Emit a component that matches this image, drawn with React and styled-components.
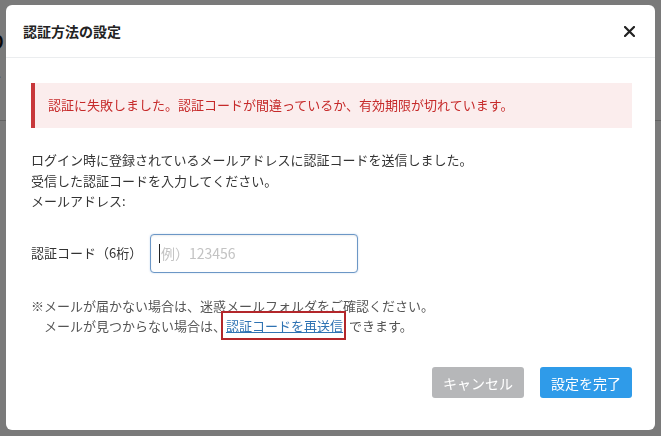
import React from 'react';
import styled, { createGlobalStyle } from 'styled-components';

const GlobalStyle = createGlobalStyle`
  html, body {
    margin: 0;
    padding: 0;
    background: #ffffff;
    font-family: "Noto Sans CJK JP", "Noto Sans", sans-serif;
    color: #333;
  }
`;

const Page = styled.div`
  width: 661px;
  height: 436px;
  overflow: hidden;
`;

const PageHeader = styled.div`
  height: 121px;
  border-bottom: 1px solid #cfcfcf;
  padding: 28px 0 0 0;
  box-sizing: border-box;
  margin-left: -12px;
`;

const PageTitle = styled.div`
  font-size: 18px;
  font-weight: bold;
  color: #111;
`;

const PageText = styled.div`
  font-size: 13px;
  line-height: 17px;
  color: #444;
`;

const Backdrop = styled.div`
  position: fixed;
  inset: 0;
  background: rgba(0, 0, 0, 0.52);
  display: flex;
  padding: 5px 6px 6px 6px;
`;

const Modal = styled.div`
  flex: 1;
  background: #fff;
  border-radius: 6px;
  display: flex;
  flex-direction: column;
`;

const Header = styled.div`
  height: 52px;
  border-bottom: 1px solid #ebedef;
  display: flex;
  align-items: center;
  justify-content: space-between;
  padding: 0 20px 0 17px;
`;

const Title = styled.h5`
  margin: 0;
  font-size: 14px;
  font-weight: bold;
  color: #222;
`;

const CloseButton = styled.button`
  border: 0;
  background: none;
  padding: 0;
  width: 11px;
  height: 11px;
  display: flex;
  cursor: pointer;
`;

const Body = styled.div`
  padding: 25px 23px 0 25px;
  font-size: 13px;
  line-height: 20.5px;
`;

const Alert = styled.div`
  height: 45px;
  box-sizing: border-box;
  background: #fbeded;
  border-left: 4px solid #c8383b;
  color: #c62a2a;
  display: flex;
  align-items: center;
  padding-left: 13px;
`;

const Message = styled.p`
  margin: 22px 0 0;
`;

const FieldRow = styled.div`
  display: flex;
  align-items: center;
  margin-top: 22px;
`;

const Label = styled.label`
  width: 119px;
  color: #333;
`;

const InputWrap = styled.div`
  position: relative;
`;

const Input = styled.input`
  width: 208px;
  height: 39px;
  box-sizing: border-box;
  border: 1px solid #6c97c6;
  border-radius: 4px;
  box-shadow: inset 0 1px 2px rgba(0, 0, 0, 0.08), 0 0 2px rgba(80, 140, 210, 0.35);
  padding: 0 10px;
  font-family: inherit;
  font-size: 14px;
  color: #333;
  outline: none;
  caret-color: transparent;

  &::placeholder {
    color: #c3c3c3;
  }
`;

const Caret = styled.span`
  position: absolute;
  left: 9px;
  top: 10px;
  width: 1px;
  height: 19px;
  background: #222;
`;

const Notes = styled.div`
  margin-top: 23px;
  color: #555;
`;

const NoteLine = styled.div`
  padding-left: ${(p) => (p.$indent ? '13px' : '0')};
`;

const Highlight = styled.span`
  border: 2px solid #b3262a;
  padding: 3px 1px 3px 3px;
  margin-left: -5px;
`;

const ResendLink = styled.a`
  color: #2f73b3;
  text-decoration: underline;
  cursor: pointer;
`;

const Footer = styled.div`
  margin-top: auto;
  display: flex;
  justify-content: flex-end;
  gap: 16px;
  padding: 0 23px 32px 0;
`;

const Button = styled.button`
  width: 92px;
  height: 31px;
  border: 0;
  border-radius: 3px;
  font-family: inherit;
  font-size: 14px;
  color: #fff;
  background: ${(p) => (p.$primary ? '#2f9be9' : '#b6b7b9')};
  cursor: pointer;
`;

export default function App() {
  return (
    <>
      <GlobalStyle />
      <Page>
        <PageHeader>
          <PageTitle>り</PageTitle>
          <PageText>こ</PageText>
          <PageText>言</PageText>
        </PageHeader>
      </Page>
      <Backdrop>
        <Modal>
          <Header>
            <Title>認証方法の設定</Title>
            <CloseButton aria-label="閉じる">
              <svg width="11" height="11" viewBox="0 0 11 11">
                <path d="M1 1 L10 10 M10 1 L1 10" stroke="#222" strokeWidth="2.2" strokeLinecap="round" />
              </svg>
            </CloseButton>
          </Header>
          <Body>
            <Alert>認証に失敗しました。認証コードが間違っているか、有効期限が切れています。</Alert>
            <Message>
              ログイン時に登録されているメールアドレスに認証コードを送信しました。
              <br />
              受信した認証コードを入力してください。
              <br />
              メールアドレス:
            </Message>
            <FieldRow>
              <Label>認証コード（6桁）</Label>
              <InputWrap>
                <Input placeholder="例）123456" />
                <Caret />
              </InputWrap>
            </FieldRow>
            <Notes>
              <NoteLine>※メールが届かない場合は、迷惑メールフォルダをご確認ください。</NoteLine>
              <NoteLine $indent>
                メールが見つからない場合は、
                <Highlight>
                  <ResendLink>認証コードを再送信</ResendLink>
                </Highlight>{' '}
                できます。
              </NoteLine>
            </Notes>
          </Body>
          <Footer>
            <Button>キャンセル</Button>
            <Button $primary>設定を完了</Button>
          </Footer>
        </Modal>
      </Backdrop>
    </>
  );
}
